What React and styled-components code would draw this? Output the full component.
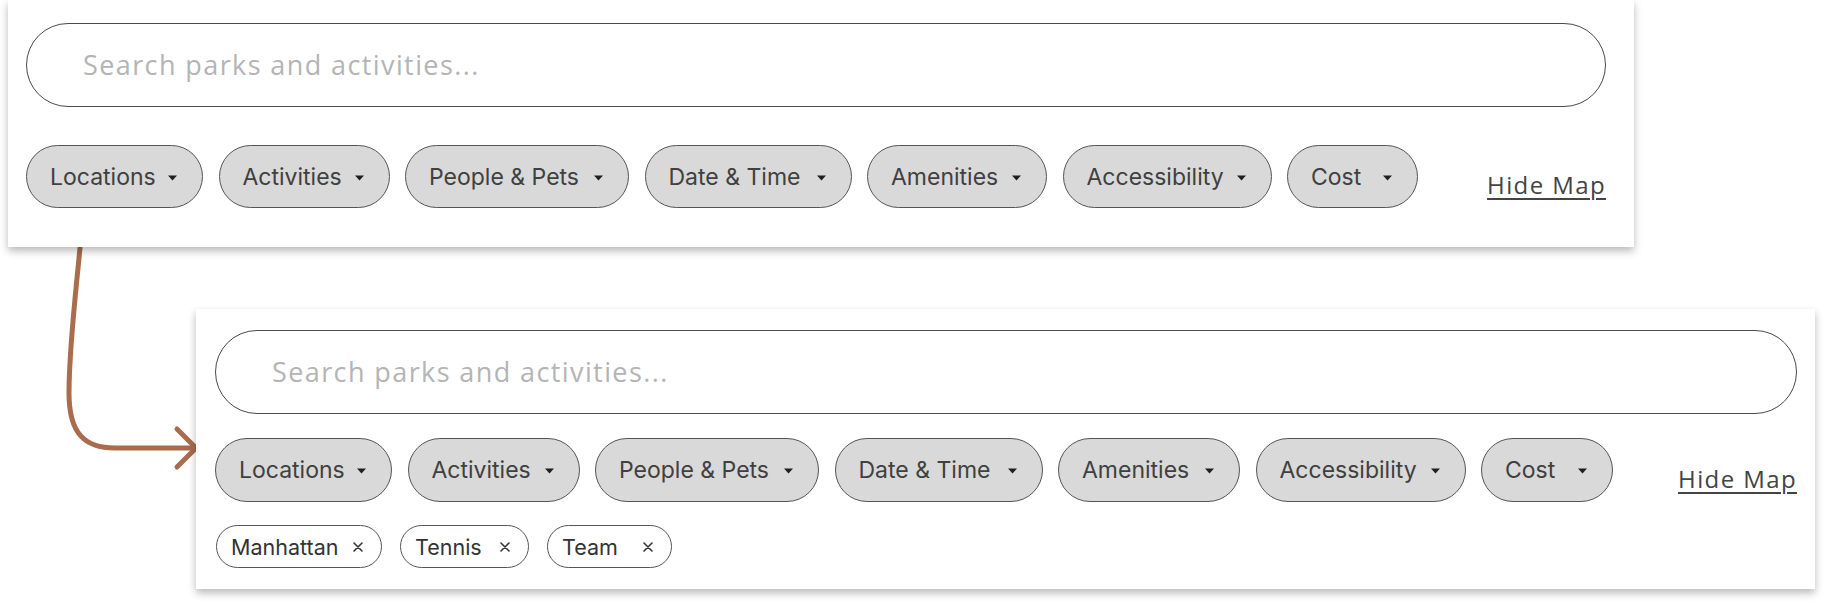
import React from "react";
import styled, { createGlobalStyle } from "styled-components";

const GlobalStyle = createGlobalStyle`
  html, body {
    margin: 0;
    padding: 0;
    background: #ffffff;
  }
  body {
    font-family: "Inter", "Liberation Sans", sans-serif;
  }
`;

const filters = [
  { label: "Locations", w: [177, 177] },
  { label: "Activities", w: [171, 172] },
  { label: "People & Pets", w: [224, 224] },
  { label: "Date & Time", w: [207, 208] },
  { label: "Amenities", w: [180, 182] },
  { label: "Accessibility", w: [209, 210] },
  { label: "Cost", w: [131, 132] },
];

const tags = [
  { label: "Manhattan", w: 166 },
  { label: "Tennis", w: 129 },
  { label: "Team", w: 125 },
];

const Caret = () => (
  <svg width="9" height="6" viewBox="0 0 9 6">
    <path d="M0 0.5 L9 0.5 L4.5 5.5 Z" fill="#1f1f1f" />
  </svg>
);

const Cross = () => (
  <svg width="10" height="10" viewBox="0 0 10 10">
    <path d="M1 1 L9 9 M9 1 L1 9" stroke="#333" strokeWidth="1.6" strokeLinecap="round" />
  </svg>
);

const FilterBar = ({ variant }) => (
  <Panel $variant={variant}>
    <SearchInput placeholder="Search parks and activities..." />
    <FilterRow $variant={variant}>
      <Chips>
        {filters.map((f) => (
          <Chip key={f.label} $w={f.w[variant]} $h={variant ? 64 : 63}>
            <span>{f.label}</span>
            <Caret />
          </Chip>
        ))}
      </Chips>
      <HideMap href="#">Hide Map</HideMap>
    </FilterRow>
    {variant === 1 && (
      <TagRow>
        {tags.map((t) => (
          <Tag key={t.label} $w={t.w}>
            <span>{t.label}</span>
            <Cross />
          </Tag>
        ))}
      </TagRow>
    )}
  </Panel>
);

const App = () => {
  return (
    <Page>
      <GlobalStyle />
      <FilterBar variant={0} />
      <FilterBar variant={1} />
      <Arrow width="220" height="480" viewBox="0 0 220 480">
        <path
          d="M80 248 C75 300 69 350 69 393 C69 434 85 448 115 448 L195 448"
          fill="none"
          stroke="#a96c4c"
          strokeWidth="5"
          strokeLinecap="round"
        />
        <path
          d="M177 429 L196 448 L177 467"
          fill="none"
          stroke="#a96c4c"
          strokeWidth="5"
          strokeLinecap="round"
          strokeLinejoin="round"
        />
      </Arrow>
    </Page>
  );
};

const Page = styled.div`
  position: relative;
  width: 1830px;
  height: 604px;
  overflow: hidden;
  display: flex;
  flex-direction: column;
  align-items: flex-start;
`;

const Arrow = styled.svg`
  position: absolute;
  left: 0;
  top: 0;
  pointer-events: none;
`;

const Panel = styled.div`
  position: relative;
  z-index: 1;
  box-sizing: border-box;
  background: #ffffff;
  box-shadow: 0 4px 8px rgba(0, 0, 0, 0.28);
  display: flex;
  flex-direction: column;
  width: ${(p) => (p.$variant ? "1619px" : "1626px")};
  margin-left: ${(p) => (p.$variant ? "196px" : "8px")};
  margin-top: ${(p) => (p.$variant ? "62px" : "0")};
  padding: ${(p) => (p.$variant ? "21px 18px 21px 19px" : "23px 28px 39px 18px")};
`;

const SearchInput = styled.input`
  box-sizing: border-box;
  width: 100%;
  height: 84px;
  border: 1.5px solid #4a4a4a;
  border-radius: 42px;
  padding: 0 0 2px 56px;
  font-family: "Open Sans", "Liberation Sans", sans-serif;
  font-size: 27px;
  letter-spacing: 1.4px;
  color: #333;
  background: #fff;
  outline: none;

  &::placeholder {
    color: #b4b4b4;
  }
`;

const FilterRow = styled.div`
  display: flex;
  align-items: center;
  margin-top: ${(p) => (p.$variant ? "24px" : "38px")};
`;

const Chips = styled.div`
  display: flex;
  gap: 15.5px;
`;

const Chip = styled.button`
  box-sizing: border-box;
  width: ${(p) => p.$w}px;
  height: ${(p) => p.$h}px;
  display: flex;
  align-items: center;
  justify-content: space-between;
  padding: 0 25px 0 23px;
  background: #d9d9d9;
  border: 1.3px solid #555;
  border-radius: 32px;
  font-family: "Inter", "Liberation Sans", sans-serif;
  font-size: 23px;
  color: #404040;
  cursor: pointer;

  svg {
    flex-shrink: 0;
    margin-top: 2px;
  }
`;

const HideMap = styled.a`
  margin-left: auto;
  margin-top: 16px;
  font-family: "Open Sans", "Liberation Sans", sans-serif;
  font-size: 24px;
  letter-spacing: 1.4px;
  color: #444;
  text-decoration: underline;
  text-decoration-thickness: 1.5px;
  text-underline-offset: 4px;
`;

const TagRow = styled.div`
  display: flex;
  gap: 18px;
  margin-top: 23px;
  padding-left: 1px;
`;

const Tag = styled.div`
  box-sizing: border-box;
  width: ${(p) => p.$w}px;
  height: 43px;
  display: flex;
  align-items: center;
  justify-content: space-between;
  padding: 0 18px 0 14px;
  border: 1.3px solid #555;
  border-radius: 22px;
  background: #fff;
  font-family: "Inter", "Liberation Sans", sans-serif;
  font-size: 21.5px;
  color: #333;
`;

export default App;
